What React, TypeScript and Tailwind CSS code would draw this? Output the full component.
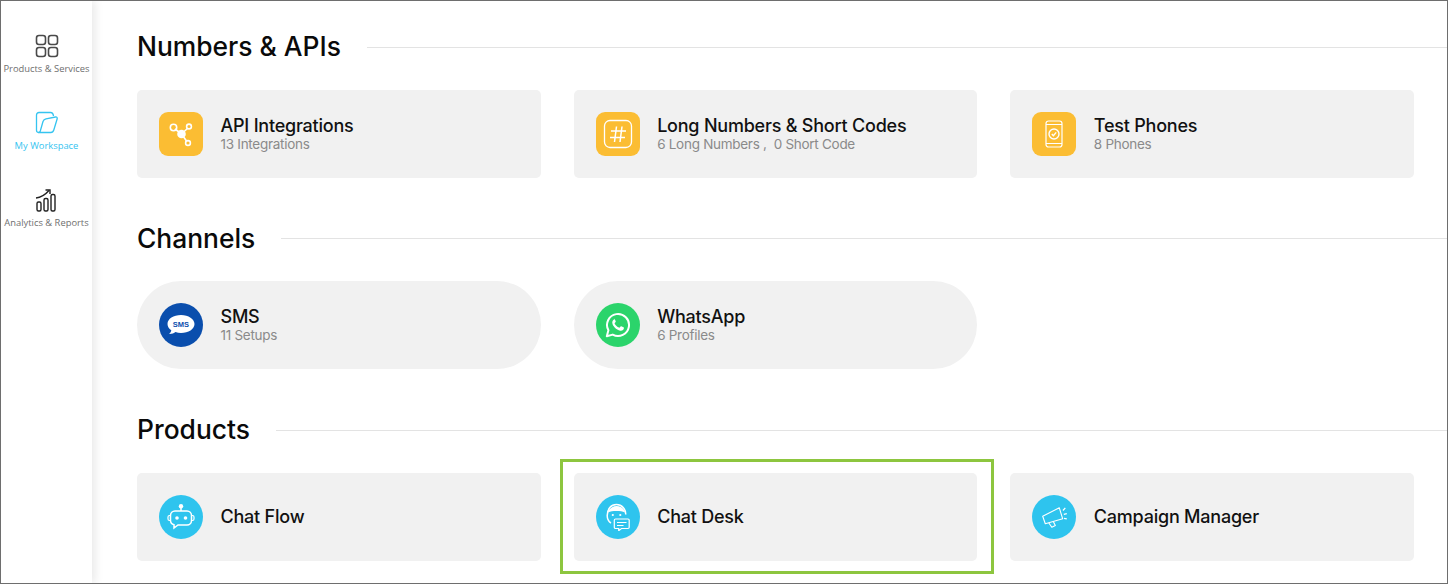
import React from 'react';

const sans = 'font-[Inter,"Liberation_Sans",sans-serif]';

const GridIcon = () => (
  <svg width="24" height="24" viewBox="0 0 24 24" fill="none" stroke="#4a4a4a" strokeWidth="1.6">
    <rect x="1.500" y="1.500" width="9" height="9" rx="2.500" />
    <rect x="13.500" y="1.500" width="9" height="9" rx="2.500" />
    <rect x="1.500" y="13.500" width="9" height="9" rx="2.500" />
    <rect x="13.500" y="13.500" width="9" height="9" rx="2.500" />
  </svg>
);

const FolderIcon = () => (
  <svg width="24" height="24" viewBox="0 0 24 24" fill="none" stroke="#35c4f0" strokeWidth="1.300" strokeLinejoin="round">
    <path d="M3.500 21.500c-1.300 0-2-.8-2-2.200V4c0-1.500 1-2.500 2.500-2.500h11.500c1.800 0 2.700 1 3 3.500" />
    <path d="M3.500 21.500c1 0 1.500-.6 1.800-1.500L8 10.500C8.500 9 9.300 8.200 11 7.800L20.500 6c1.300-.2 2 .6 1.700 1.800L18.800 19c-.5 1.600-1.300 2.500-3 2.500z" />
  </svg>
);

const ChartIcon = () => (
  <svg width="24" height="24" viewBox="0 0 24 24" fill="none" stroke="#222" strokeWidth="1.400">
    <rect x="2" y="14" width="4" height="9" rx="1.500" />
    <rect x="9" y="10.500" width="4" height="12.500" rx="1.500" />
    <rect x="16" y="6.500" width="4" height="16.500" rx="1.500" />
    <path d="M1 10c5-.5 9-3 13-7.500" />
    <path d="M10.500 2h4.500v4" />
  </svg>
);

const ShareIcon = () => (
  <svg width="26" height="26" viewBox="0 0 26 26" fill="none" stroke="#fff" strokeWidth="1.600">
    <path d="M7 8l6 4.500M19.500 7.500l-5 4.500M15 15l3.500 5" />
    <circle cx="5.500" cy="6.500" r="3.200" />
    <circle cx="21" cy="5.500" r="2.400" />
    <circle cx="20" cy="22" r="2.400" />
    <circle cx="13.500" cy="13" r="4.300" fill="#fff" stroke="none" />
  </svg>
);

const HashIcon = () => (
  <svg width="30" height="30" viewBox="0 0 30 30" fill="none" stroke="#fff" strokeWidth="1.300">
    <rect x="1.500" y="1.500" width="27" height="27" rx="5.500" />
    <path d="M8 12h15M7 18.500h15M13.500 7.500 11.500 23M19 7.500 17 23" strokeWidth="1.500" />
  </svg>
);

const PhoneIcon = () => (
  <svg width="18" height="28" viewBox="0 0 18 28" fill="none" stroke="#fff" strokeWidth="1.200">
    <rect x="1" y="1" width="16" height="26" rx="2.500" />
    <path d="M1 4.500h16M1 23.500h16" />
    <circle cx="9" cy="14" r="5" strokeWidth="1.400" />
    <path d="m6.800 14 1.600 1.700 2.800-3.300" strokeWidth="1.400" />
  </svg>
);

const SmsIcon = () => (
  <svg width="30" height="26" viewBox="0 0 30 26" fill="none">
    <path d="M15 3C7.500 3 1.500 6.800 1.500 12c0 2.600 1.400 4.700 3.800 6.300-.2 1.500-1 2.900-2.300 3.700 2.700.1 5-.6 6.500-1.900 1.700.6 3.500.9 5.500.9 7.500 0 13.500-4 13.500-9S22.500 3 15 3z" fill="#fff" />
    <text x="15" y="15" textAnchor="middle" fontSize="7.500" fontWeight="700" fill="#0a4ead" fontFamily="Liberation Sans, sans-serif">SMS</text>
  </svg>
);

const WhatsAppIcon = () => (
  <svg width="26" height="26" viewBox="0 0 26 26" fill="none">
    <path d="M1.800 24.200 3.400 18.300A11 11 0 1 1 7.700 22.600z" stroke="#fff" strokeWidth="2" strokeLinejoin="round" />
    <path d="M9.700 7.300c-.5 0-1 .2-1.400.7-.6.700-1.100 1.600-1 2.800.1 1.600 1 3.200 2.400 4.700 1.600 1.700 3.500 2.900 5.500 3.200 1.200.2 2.300-.2 3-.9.500-.5.700-1.200.7-1.900 0-.3-.1-.4-.4-.6l-2.200-1.100c-.3-.1-.5-.1-.7.200l-.9 1.100c-.2.200-.4.300-.7.100-1.900-.8-3.300-2-4.300-3.900-.1-.3-.1-.5.100-.7l.8-1c.2-.2.2-.4.100-.7l-1-2.300c-.1-.3-.3-.5-.6-.5z" fill="#fff" />
  </svg>
);

const BotIcon = () => (
  <svg width="28" height="28" viewBox="0 0 28 28" fill="none" stroke="#fff" strokeWidth="1.500">
    <circle cx="14" cy="3.200" r="2.200" fill="#fff" stroke="none" />
    <path d="M14 4v4" />
    <path d="M8 8h12a4.500 4.500 0 0 1 4.500 4.500v5a4.500 4.500 0 0 1-4.500 4.500h-9l-4 3v-3.200a4.500 4.500 0 0 1-3.500-4.300v-5A4.500 4.500 0 0 1 8 8z" />
    <circle cx="10" cy="15" r="1.800" fill="#fff" stroke="none" />
    <circle cx="18.500" cy="15" r="1.800" fill="#fff" stroke="none" />
    <path d="M3.500 12.500H2.500a1.500 1.500 0 0 0-1.500 1.500v2a1.500 1.500 0 0 0 1.500 1.500h1M24.500 12.500h1a1.500 1.500 0 0 1 1.500 1.500v2a1.500 1.500 0 0 1-1.500 1.500h-1" strokeWidth="1.200" />
  </svg>
);

const AgentIcon = () => (
  <svg width="24" height="28" viewBox="0 0 24 28" fill="none" stroke="#fff" strokeWidth="1.500">
    <path d="M5 20c-2.500-1.500-3.800-4.200-3.800-7.500C1.200 6 5 1.500 10.500 1.500S19.800 6 19.800 11.500" />
    <path d="M1.800 9.500c1-3.500 4.500-6.500 8.700-6.500s7.700 2.800 8.700 6.500c-3-1.500-5-1.500-8.700-1.500s-5.700.2-8.700 1.500z" fill="#fff" stroke="none" />
    <circle cx="6.800" cy="12" r="1.100" fill="#fff" stroke="none" />
    <circle cx="14.300" cy="12" r="1.100" fill="#fff" stroke="none" />
    <path d="M9.500 16h12.500a1.200 1.200 0 0 1 1.200 1.200v7.100a1.200 1.200 0 0 1-1.200 1.200h-6.500l-2.800 2.200v-2.200H9.500a1.200 1.200 0 0 1-1.200-1.200v-7.100A1.200 1.200 0 0 1 9.500 16z" fill="#2ec4ee" strokeWidth="1.200" />
    <path d="M11 19.500h9.500M11 22.500h6.500" strokeWidth="1.200" />
  </svg>
);

const MegaphoneIcon = () => (
  <svg width="25" height="21" viewBox="0 0 25 21" fill="none" stroke="#fff" strokeWidth="1.100" strokeLinejoin="round">
    <path d="M.7 9.300 17.300.8l3.400 11-17.400 5z" />
    <path d="M6.700 15.800 9.800 20.300l3.500-1.700-2-4" />
    <path d="M21 3.500l2.300-2.700M21.800 7.400l3-.7M22 11.300l2.800.5" strokeWidth="1.300" />
  </svg>
);

const NavItem = ({ icon, label, active }: { icon: React.ReactNode; label: string; active?: boolean }) => (
  <div className="h-[77px] flex flex-col items-center">
    <div className="h-[24px] flex items-center justify-center">{icon}</div>
    <span className={`mt-[5px] text-[9.400px] leading-[12px] whitespace-nowrap font-['Open_Sans',sans-serif] ${active ? 'text-[#35c4f0]' : 'text-[#6f6f6f]'}`}>
      {label}
    </span>
  </div>
);

const Card = ({
  icon,
  iconClass,
  title,
  sub,
  rounded,
}: {
  icon: React.ReactNode;
  iconClass: string;
  title: string;
  sub?: string;
  rounded?: boolean;
}) => (
  <div className={`h-[88px] bg-[#f1f1f1] flex items-center pl-[22px] ${rounded ? 'rounded-[44px]' : 'rounded-[5px]'}`}>
    <div className={`w-[44px] h-[44px] shrink-0 flex items-center justify-center ${iconClass}`}>{icon}</div>
    <div className="ml-[17.500px] -mt-[1px]">
      <div className="text-[18px] leading-[22px] font-medium tracking-[-0.22px] text-[#111]">{title}</div>
      {sub && <div className="text-[13.500px] leading-[15px] tracking-[-0.28px] text-[#8a8a8a] whitespace-pre">{sub}</div>}
    </div>
  </div>
);

const Heading = ({ title, textClass = '-mt-[2px]' }: { title: string; textClass?: string }) => (
  <div className="flex items-center gap-[26px] h-[34px]">
    <h2 className={`text-[26.400px] font-medium leading-[34px] text-[#0a0a0a] whitespace-nowrap ${textClass}`}>{title}</h2>
    <div className="flex-1 h-px bg-[#e3e3e3]" />
  </div>
);

const yellow = 'bg-[#fbbd33] rounded-[9px]';
const blue = 'bg-[#2ec4ee] rounded-full';

export default function App() {
  return (
    <div className={`w-[1448px] h-[584px] border border-[#6e6e6e] flex overflow-hidden bg-white ${sans}`}>
      {/* Side nav */}
      <aside className="w-[91px] shrink-0 pt-[33px] flex flex-col shadow-[4px_0_8px_rgba(0,0,0,0.08)] z-10 bg-white">
        <NavItem icon={<GridIcon />} label="Products & Services" />
        <NavItem icon={<FolderIcon />} label="My Workspace" active />
        <NavItem icon={<ChartIcon />} label="Analytics & Reports" />
      </aside>

      <main className="flex-1 pl-[45px] pt-[29px]">
        <Heading title="Numbers & APIs" />
        <div className="grid grid-cols-3 gap-[33px] w-[1277px] mt-[26px]">
          <Card icon={<ShareIcon />} iconClass={yellow} title="API Integrations" sub="13 Integrations" />
          <Card icon={<HashIcon />} iconClass={yellow} title="Long Numbers & Short Codes" sub="6 Long Numbers ,  0 Short Code" />
          <Card icon={<PhoneIcon />} iconClass={yellow} title="Test Phones" sub="8 Phones" />
        </div>

        <div className="mt-[43px]">
          <Heading title="Channels" textClass="mt-0" />
        </div>
        <div className="grid grid-cols-3 gap-[33px] w-[1277px] mt-[26px]">
          <Card icon={<SmsIcon />} iconClass="bg-[#0a4ead] rounded-full" title="SMS" sub="11 Setups" rounded />
          <Card icon={<WhatsAppIcon />} iconClass="bg-[#2bd46b] rounded-full" title="WhatsApp" sub="6 Profiles" rounded />
        </div>

        <div className="mt-[44px]">
          <Heading title="Products" />
        </div>
        <div className="grid grid-cols-3 gap-[33px] w-[1277px] mt-[26px]">
          <Card icon={<BotIcon />} iconClass={blue} title="Chat Flow" />
          <div className="relative">
            <Card icon={<AgentIcon />} iconClass={blue} title="Chat Desk" />
            <div className="absolute -left-[14px] -right-[17px] -top-[14px] -bottom-[13px] border-[3px] border-[#8dc63f]" />
          </div>
          <Card icon={<MegaphoneIcon />} iconClass={blue} title="Campaign Manager" />
        </div>
      </main>
    </div>
  );
}
